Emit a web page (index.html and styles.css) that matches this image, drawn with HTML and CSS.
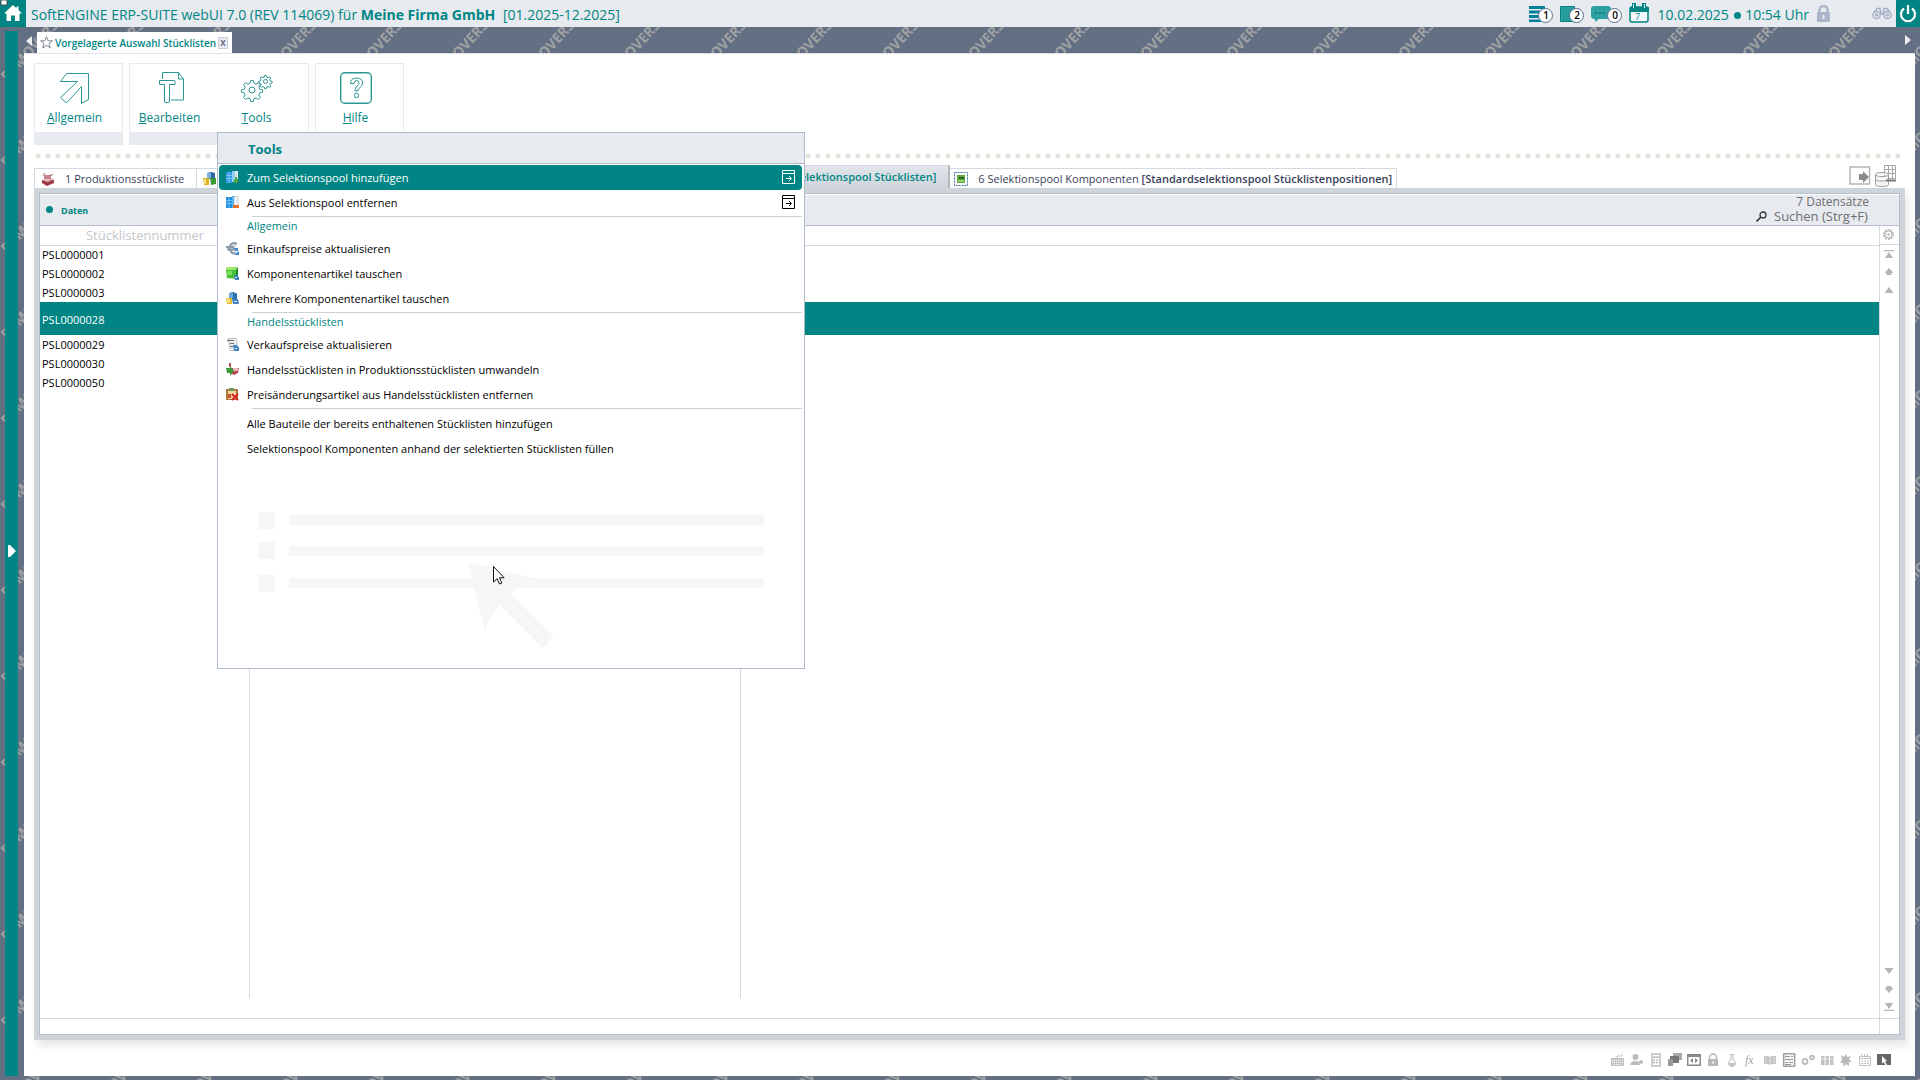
FILE: index.html
```html
<!DOCTYPE html>
<html lang="de">
<head>
<meta charset="utf-8">
<title>SoftENGINE ERP-SUITE webUI 7.0</title>
<link rel="stylesheet" href="styles.css">
</head>
<body>
<svg class="watermark" aria-hidden="true">
  <defs>
    <pattern id="demo" width="86" height="86" patternUnits="userSpaceOnUse">
      <g class="watermark-text">
        <text transform="translate(7 82) rotate(-47)">DEMOVERSION</text>
        <text transform="translate(93 82) rotate(-47)">DEMOVERSION</text>
        <text transform="translate(7 168) rotate(-47)">DEMOVERSION</text>
      </g>
    </pattern>
  </defs>
  <rect width="100%" height="100%" fill="url(#demo)"/>
</svg>

<header class="topbar">
  <button class="home" type="button" aria-label="Startseite">
    <svg width="26" height="27" viewBox="0 0 26 27"><path fill="#fff" d="M13 5 4 13.500H6.500V21H11V15.500H15V21H19.500V13.500H22L18.500 10V6.500H16.500V8.200Z"/><rect x="1" y="0" width="6" height="5" fill="#fff" stroke="#555"/></svg>
  </button>
  <h1 class="app-title">SoftENGINE ERP-SUITE webUI 7.0 (REV 114069) für <strong>Meine Firma GmbH</strong> <span>[01.2025-12.2025]</span></h1>
  <div class="topbar-tools">
    <button class="counter" type="button" aria-label="Aufgaben">
      <svg width="17" height="17" viewBox="0 0 17 17" fill="#00809b"><path d="M0 0h16v3H0zM0 4.500h12v3H0zM0 9h10v3H0zM0 13.500h12v2.500H0z"/></svg><span class="badge">1</span>
    </button>
    <button class="counter" type="button" aria-label="Belege">
      <svg width="17" height="17" viewBox="0 0 17 17"><path fill="#2fa0a2" stroke="#008584" d="M.5.5h14v15H.5z"/><path stroke="#008584" stroke-dasharray="1 1" d="M3 4h2M6 4h7M3 7h2M6 7h7M3 10h2M6 10h7M3 13h2M6 13h5"/></svg><span class="badge">2</span>
    </button>
    <button class="counter counter-wide" type="button" aria-label="Nachrichten">
      <svg width="21" height="17" viewBox="0 0 21 17"><path fill="#2fa0a2" d="M3 0h14q3 0 3 3v7q0 3-3 3H8l-4 3v-3H3q-3 0-3-3V3q0-3 3-3z"/><path fill="#008584" d="M4 6h2v2H4zM8 6h2v2H8zM12 6h2v2h-2z"/></svg><span class="badge">0</span>
    </button>
    <svg width="21" height="21" viewBox="0 0 21 21"><rect x="1" y="4" width="18" height="15" rx="2" fill="#f4f8f9" stroke="#008584" stroke-width="1.500"/><path fill="#008584" d="M1 4h19v5H1zM3 0h4v5H3zM13 0h4v5h-4z"/><path stroke="#e7eaef" d="M4.500 1v4M15.500 1v4"/><text x="6" y="17" class="cal-day">7</text></svg>
    <time class="clock">10.02.2025 <i></i> 10:54 Uhr</time>
    <svg class="lock" width="15" height="18" viewBox="0 0 15 18"><path fill="none" stroke="#aab6c8" stroke-width="2.500" d="M3.500 8V5a4 4 0 0 1 8 0v3"/><rect x="1" y="7" width="13" height="10" rx="1" fill="#aab6c8"/><path fill="#e7eaef" d="M6.500 10h2v4h-2z"/></svg>
    <svg width="20" height="13" viewBox="0 0 20 13"><g fill="none" stroke="#a5b2c6" stroke-width="1.500"><circle cx="4.500" cy="8" r="3.600"/><circle cx="15.500" cy="8" r="3.600"/><circle cx="4.500" cy="8" r="1"/><circle cx="15.500" cy="8" r="1"/><path d="M2 5 5 1.500h3L9 7h2l1-5.500h3L18 5"/></g></svg>
  </div>
  <button class="power" type="button" aria-label="Abmelden">
    <svg width="18" height="18" viewBox="0 0 18 18"><path fill="none" stroke="#fff" stroke-width="2.200" d="M5 3.500a7 7 0 1 0 8 0M9 0v9"/></svg>
  </button>
</header>

<div class="workspace">
  <aside class="rail"><svg width="8" height="12" viewBox="0 0 8 12"><path fill="#fff" d="M0 0h2l6 6-6 6H0z"/></svg></aside>
  <div class="content">
    <nav class="tabstrip">
      <svg class="scroll-left" width="6" height="10" viewBox="0 0 6 10"><path fill="#eee" d="M6 0 0 5l6 5z"/></svg>
      <div class="doc-tab">
        <svg width="13" height="13" viewBox="0 0 13 13"><path fill="none" stroke="#7d828c" d="m6.500.8 1.700 4h4.200L9 7.600l1.300 4.300-3.800-2.600-3.800 2.600L4 7.600.6 4.800h4.200z"/></svg>
        <a href="#daten">Vorgelagerte Auswahl Stücklisten</a>
        <button type="button" aria-label="Schließen">x</button>
      </div>
      <svg class="scroll-right" width="6" height="10" viewBox="0 0 6 10"><path fill="#eee" d="M0 0l6 5-6 5z"/></svg>
    </nav>

    <main class="page">
      <div class="ribbon">
        <div class="ribbon-group">
          <button type="button"><svg width="32" height="32" viewBox="0 0 32 32"><path d="M7.500 1.500h22v26l-7 4v-17L7.500 31l-6-5.500 17-16H1.500z"/></svg><span><u>A</u>llgemein</span></button>
        </div>
        <div class="ribbon-group">
          <button type="button"><svg width="32" height="32" viewBox="0 0 32 32"><path d="M8.500 7V.5h16l5 6.500v21H17M24.500.5V7h5M5.500 8.500H20q1 0 1 1v3h-5.500V30q-2.500 1.500-5 0V12.500H5.500z"/></svg><span><u>B</u>earbeiten</span></button>
          <div class="ribbon-menu">
            <button type="button" aria-expanded="true"><svg width="32" height="32" viewBox="0 0 32 32"><circle cx="11" cy="18" r="3"/><path d="m9.700 8.500 2.600 0 .6 2.800 2 .9 2.500-1.500 1.900 1.900-1.500 2.500.8 2 2.900.7v2.500l-2.900.7-.8 2 1.500 2.500-1.900 1.900-2.500-1.500-2 .8-.6 2.800H9.700l-.7-2.800-2-.8-2.500 1.500-1.900-1.900 1.500-2.500-.8-2-2.800-.7v-2.500l2.800-.7.8-2-1.500-2.500 1.900-1.900L7 12.200l2-.9z"/><circle cx="24.500" cy="9.500" r="2"/><path d="m23.700 3.500 1.600 0 .5 1.700 1.200.5 1.600-.9 1.200 1.200-.9 1.600.5 1.200 1.700.5v1.600l-1.700.5-.5 1.200.9 1.600-1.200 1.200-1.600-.9-1.200.5-.5 1.700h-1.600l-.5-1.700-1.200-.5-1.600.9-1.200-1.200.9-1.600-.5-1.200-1.700-.5V9.300l1.700-.5.5-1.200-.9-1.600 1.200-1.200 1.600.9 1.200-.5z"/></svg><span><u>T</u>ools</span></button>
            <div class="menu" role="menu">
              <h2>Tools</h2>
              <div class="menu-body">
                <button type="button" role="menuitem" class="active"><svg class="ico" viewBox="0 0 13 13"><path fill="#2e9be8" d="M0 1h6v11H0z"/><path fill="#8fd0f8" d="M6 0h3v11H6z"/><path stroke="#7cc4f3" d="M0 4.500h6M0 7.500h6M3 1v11"/><path fill="#dfe6ea" d="M9 0h3v8H9z"/><path fill="#4aa53c" d="M9 6h2v3h2l-3 4-3-4h2z"/></svg><span>Zum Selektionspool hinzufügen</span><svg class="win" viewBox="0 0 14 15"><path d="M.5.5h12v13H.5zM.5 3.500h12M4 8.500h5M7 6l2.500 2.500L7 11"/></svg></button>
                <button type="button" role="menuitem"><svg class="ico" viewBox="0 0 13 13"><path fill="#1e8fe0" d="M0 1h6v11H0z"/><path fill="#55b4f4" d="M6 0h2v12H6z"/><path stroke="#6fc0f5" d="M0 4.500h6M0 7.500h6M3 1v11"/><path fill="#f2f4f6" stroke="#a9b4bd" stroke-width=".6" d="M8 .5h4v9H8z"/><path fill="#e8722a" d="M7 9h6v3H7z"/></svg><span>Aus Selektionspool entfernen</span><svg class="win" viewBox="0 0 14 15"><path d="M.5.5h12v13H.5zM.5 3.500h12M4 8.500h5M7 6l2.500 2.500L7 11"/></svg></button>
                <h3>Allgemein</h3>
                <button type="button" role="menuitem"><svg class="ico" viewBox="0 0 13 13"><path fill="#dfe3e7" d="M4 1h6v10H5L3 8V3z"/><path fill="none" stroke="#8c97a3" stroke-width="1.800" d="M11 2Q7-.5 4.500 3T5 10q2 2 4 1M0 5h8M1 7.500h7"/><path fill="#4b8bcc" d="M7 6h5v3H9zM13 9v4H8l2-2z"/></svg><span>Einkaufspreise aktualisieren</span></button>
                <button type="button" role="menuitem"><svg class="ico" viewBox="0 0 13 13"><path fill="#9be86c" d="M0 1 2 0h10l-2 3H0z"/><path fill="#45c23a" d="M0 3h10v9L1 11z"/><path fill="#7fdc5c" d="M1 4h5v4H1z"/><path fill="#1d8a2a" d="m10 3 2-3v9l-2 3z"/><path fill="#3f80c8" d="M8 8h4v2h1v3H9z"/><path fill="#cfe3f7" d="M9 10h2v1H9z"/></svg><span>Komponentenartikel tauschen</span></button>
                <button type="button" role="menuitem"><svg class="ico" viewBox="0 0 13 13"><path fill="#2d6fae" d="M3 1 7 0l4 1.500V7H3z"/><path fill="#6aa8dc" d="M3 1h4v5H3z"/><path fill="#e2b82c" d="M0 6h6v6H1z"/><path fill="#f6e07a" d="M1 7h3v4H1z"/><path fill="#4684c8" d="M6 7h6l1 5H7z"/><path fill="#cde2f6" d="M8 9h3v1H8z"/></svg><span>Mehrere Komponentenartikel tauschen</span></button>
                <h3>Handelsstücklisten</h3>
                <button type="button" role="menuitem"><svg class="ico" viewBox="0 0 13 13"><path fill="#e8eaec" stroke="#9aa1a8" stroke-width=".6" d="M2 .5h8l1 3v9H4z"/><path stroke="#6a7076" d="M1 2.500h7M4 5.500h4M4 8.500h3"/><path fill="#4583c7" d="M7 7h4l2 3v3H8z"/><path fill="#d6e6f7" d="M9 10h2v1H9z"/></svg><span>Verkaufspreise aktualisieren</span></button>
                <button type="button" role="menuitem"><svg class="ico" viewBox="0 0 13 13"><path fill="#b6474f" d="M4 5h9l-1 5-4 2-4-2z"/><path fill="#e6b6b9" d="M7 5h5v3H7z"/><path fill="#3d9a3a" d="M0 5h4V3l4 5-4 5v-3H1z"/><path fill="#c05058" d="M3 0h2v4H3z"/></svg><span>Handelsstücklisten in Produktionsstücklisten umwandeln</span></button>
                <button type="button" role="menuitem"><svg class="ico" viewBox="0 0 13 13"><path fill="#b07a3c" d="M0 1h12v11H0z"/><path fill="#f0d4a4" d="M2 3h8v8H2z"/><path fill="#6e9f50" d="M3 0h5v3H3z"/><path fill="#c9562c" d="M2 6h3v4H2z"/><path stroke="#d8201c" stroke-width="1.800" d="m6 6 6 6m0-6-6 6"/></svg><span>Preisänderungsartikel aus Handelsstücklisten entfernen</span></button>
                <hr>
                <button type="button" role="menuitem"><span>Alle Bauteile der bereits enthaltenen Stücklisten hinzufügen</span></button>
                <button type="button" role="menuitem"><span>Selektionspool Komponenten anhand der selektierten Stücklisten füllen</span></button>
              </div>
              <svg class="menu-art" width="508" height="137" viewBox="0 0 508 137" fill="#f4f6f8"><path d="M1 0h17v17H1zM1 30h17v17H1zM1 63h17v17H1zM32 3h475v10H32zM32 34h475v10H32zM32 66h475v10H32z"/><path d="m211 50 64 16-22 15 44 44-11 11-43-43q-12 12-15 27z"/></svg>
            </div>
          </div>
        </div>
        <div class="ribbon-group">
          <button type="button"><svg width="32" height="32" viewBox="0 0 32 32"><rect x=".7" y=".7" width="30.600" height="30.600" rx="4" stroke-width="1.400"/><path d="M10.500 11.500q0-5.500 6-5.500t6 5q0 3-3 5-1.500 1-1.500 3h-3q0-3.500 2-5 2-1.500 2-3 0-2.500-2.500-2.500T14 11.500z"/><circle cx="16.500" cy="23.500" r="2.200"/></svg><span><u>H</u>ilfe</span></button>
        </div>
      </div>
      <div class="dots"></div>

      <nav class="view-tabs">
        <a href="#t1" class="view-tab"><svg width="14" height="14" viewBox="0 0 14 14"><path fill="#a03a42" d="M1 8h12v3l-7 3-5-3z"/><path fill="#e3b5b9" d="m1 8 6 2 6-3-3-1z"/><path fill="#c9848a" d="M3 3h7v4H3z"/><path stroke="#8b5a5f" d="M2 3.500 4 1M8 4l4-1.500"/></svg><span>1 Produktionsstückliste</span></a>
        <a href="#t2" class="view-tab view-tab-wide" aria-label="Tab 2"><svg width="14" height="14" viewBox="0 0 14 14"><path fill="#2c66a8" d="M4 1 8 0l4 1v6H4z"/><path fill="#7fb2e2" d="M4 1h4v5H4z"/><path fill="#d9b125" d="M0 6h6v7H1z"/><path fill="#f5e58c" d="M1 7h2v5H1z"/><path fill="#3c9a35" d="M7 6h6v6l-5 1z"/></svg></a>
        <a href="#t5" class="view-tab current"><b>[Standardselektionspool Stücklisten]</b></a>
        <a href="#t6" class="view-tab view-tab-last"><svg width="14" height="14" viewBox="0 0 14 14"><path fill="#fff" stroke="#41719c" stroke-dasharray="2 1" d="M.5.500h13v13H.5z"/><path fill="#5da83c" d="M3 3h8v8H3z"/><path fill="#2f5f22" d="M5 5h5v2H5z"/><path fill="#8fd46a" d="M4 8h6v2H4z"/></svg><span>6 Selektionspool Komponenten <b>[Standardselektionspool Stücklistenpositionen]</b></span></a>
        <div class="view-tools">
          <svg width="22" height="20" viewBox="0 0 22 20"><path fill="#fff" stroke="#b5b5b5" stroke-width="1.500" d="M1 1h19.500v17H1z"/><path fill="#8a8a8a" d="M10 8h4V5l6 6-6 6v-3h-4z"/></svg>
          <svg width="22" height="22" viewBox="0 0 22 22"><path fill="#fff" stroke="#a6a6a6" d="M9.500.5h11v13h-11zM9.500 4.500h11M9.500 8.500h11M13.500.5v13M17.500.5v13"/><path fill="#f4f4f4" stroke="#a0a0a0" d="M.5 9.500q0-2 6.500-2t6.500 2v10q0 2-6.500 2t-6.500-2zM.5 9.500q0 2 6.500 2t6.500-2M.5 14q0 2 6.500 2t6.500-2"/><path stroke="#777" stroke-width="2" d="M11 15.500h10"/></svg>
        </div>
      </nav>

      <section class="panel" id="daten">
        <header class="panel-head">
          <h2><i></i>Daten</h2>
          <div class="panel-search">
            <output>7 Datensätze</output>
            <label><svg width="11" height="11" viewBox="0 0 11 11"><circle cx="7" cy="4" r="3" fill="none" stroke="#333" stroke-width="1.300"/><path stroke="#333" stroke-width="1.600" d="M5 6 .5 10.500"/></svg><input type="text" placeholder="Suchen (Strg+F)" aria-label="Suchen"></label>
          </div>
        </header>
        <div class="panel-body">
          <div class="grid">
            <table>
              <colgroup><col class="c1"><col class="c2"><col></colgroup>
              <thead><tr><th scope="col">Stücklistennummer</th><th></th><th></th></tr></thead>
              <tbody>
                <tr><td>PSL0000001</td><td></td><td></td></tr>
                <tr><td>PSL0000002</td><td></td><td></td></tr>
                <tr><td>PSL0000003</td><td></td><td></td></tr>
                <tr class="selected"><td>PSL0000028</td><td></td><td></td></tr>
                <tr><td>PSL0000029</td><td></td><td></td></tr>
                <tr><td>PSL0000030</td><td></td><td></td></tr>
                <tr><td>PSL0000050</td><td></td><td></td></tr>
              </tbody>
            </table>
            <div class="grid-fill"><div></div><div></div></div>
            <div class="grid-foot"></div>
          </div>
          <div class="grid-rail">
            <div class="rail-cfg"><svg width="11" height="11" viewBox="0 0 11 11"><circle cx="5.500" cy="5.500" r="4.500" fill="none" stroke="#b4b4b4" stroke-width="2" stroke-dasharray="1.800 1"/><circle cx="5.500" cy="5.500" r="3.500" fill="none" stroke="#b4b4b4"/><circle cx="5.500" cy="5.500" r="1.300" fill="#b4b4b4"/></svg></div>
            <div class="rail-arrows">
              <svg viewBox="0 0 10 8"><path d="M0 0h10v1.200H0zM5 2l4 6H1z"/></svg>
              <svg viewBox="0 0 10 8"><path d="m5 0 4.500 5H7l1 2H2l1-2H.5z"/></svg>
              <svg viewBox="0 0 10 8"><path d="m5 1 4.500 6h-9z"/></svg>
              <svg class="push" viewBox="0 0 10 8"><path d="m5 7 4.500-6h-9z"/></svg>
              <svg viewBox="0 0 10 8"><path d="m5 8 4.500-5H7L8 1H2l1 2H.5z"/></svg>
              <svg viewBox="0 0 10 8"><path d="M0 6.800h10V8H0zM5 6l4-6H1z"/></svg>
            </div>
            <div class="grid-foot"></div>
          </div>
        </div>
      </section>

      <footer class="status">
        <svg viewBox="0 0 14 14"><path d="M0 5h13v8H0z" fill="#c4c4c4"/><path stroke="#fff" stroke-dasharray="1 1" d="M1 7.500h11M1 9.500h11M3 11.500h7"/><path fill="none" stroke="#c4c4c4" d="M6 5V3h5V1"/></svg>
        <svg viewBox="0 0 14 14" fill="#bdbdbd"><circle cx="5.500" cy="4" r="3"/><path d="M0 12q1-4 5.500-4T10 12z"/><circle cx="11" cy="9" r="2"/></svg>
        <svg viewBox="0 0 14 14"><rect x="3" y="1" width="8" height="12" fill="none" stroke="#bdbdbd" stroke-width="1.500"/><path stroke="#bdbdbd" stroke-width="1.500" d="M4 4h6"/><path stroke="#bdbdbd" stroke-width="1.500" stroke-dasharray="2 1" d="M4 7h7M4 9.500h7"/></svg>
        <svg viewBox="0 0 14 14"><path fill="#aaa" d="M5 0h9v7H5z"/><path fill="#777" d="M2 3h9v7H2z"/><path fill="#999" d="M0 6h5v7H0z"/></svg>
        <svg viewBox="0 0 14 14"><path fill="#fff" stroke="#888" stroke-width="1.500" d="M.7 2.700h12.600v9.600H.7z"/><path fill="#888" d="M0 1h14v3H0zM6 5v5L3 7.500zM8 5v5l3-2.500z"/></svg>
        <svg viewBox="0 0 14 14"><path fill="none" stroke="#b8b8b8" stroke-width="1.500" d="M3.500 6V4.500a3.500 3.500 0 0 1 7 0V6"/><path fill="#b8b8b8" d="M2 6h10v7H2z"/><path fill="#fff" d="M6.500 8h1v3h-1z"/></svg>
        <svg viewBox="0 0 14 14"><path fill="none" stroke="#bdbdbd" d="M5 1.500h4M6 2v5a3.500 3.500 0 1 0 2 0V2"/><path fill="#bdbdbd" d="M4 10h6q-.5 3-3 3t-3-3z"/></svg>
        <svg viewBox="0 0 14 14"><text x="1" y="11" class="fx">fx</text></svg>
        <svg viewBox="0 0 14 14"><path fill="#c2c2c2" d="M1 3q3-1 6 1 3-2 6-1v8q-3-1-6 1-3-2-6-1z"/><path stroke="#fff" stroke-width=".6" d="M7 4v8M3 4v6M11 4v6"/></svg>
        <svg viewBox="0 0 14 14"><path fill="#f4f4f4" stroke="#a0a0a0" stroke-width="1.500" d="M1.700.7h11v12.600h-11z"/><path stroke="#999" d="M3 3.500h5M3 6.500h8M3 9.500h3M7 9.500h4M9 3.500h2M3 11.500h6"/></svg>
        <svg viewBox="0 0 14 14"><g fill="none" stroke="#b8b8b8" stroke-width="1.600"><circle cx="4" cy="8.500" r="2.600"/><circle cx="11" cy="4.500" r="1.900"/></g></svg>
        <svg viewBox="0 0 14 14"><path fill="#c2c2c2" d="M1 3h3.500v9H1zM5.500 3H9v9H5.500zM10 3h3.500v9H10z"/><path stroke="#fff" stroke-width=".6" d="M1 6h13"/></svg>
        <svg viewBox="0 0 14 14"><path fill="#bababa" d="m2 2 3 2 2-3 1 3 4-1-2 3 3 3-3 0 0 4-3-2-2 3-1-4-3 0 2-3z"/></svg>
        <svg viewBox="0 0 14 14"><path fill="none" stroke="#c2c2c2" d="M1.500 3.500h11v9h-11zM1 5.500h12M3.500 1v2M6.500 1v2M9.500 1v2"/><path stroke="#c2c2c2" stroke-dasharray="2 1" d="M3 8h8M3 10.500h8"/></svg>
        <svg viewBox="0 0 14 14"><path fill="#666" d="M0 1h14v11H0z"/><path fill="#fff" d="m5 3 5 5H8l2 4-1.500 1-1.500-4-2 1.500z"/></svg>
      </footer>
    </main>
  </div>
</div>
<svg class="pointer" width="12" height="19" viewBox="0 0 12 19"><path fill="#fff" stroke="#111" d="M.5.500v15.500l3.600-3.300 2.400 5.300 2.300-1-2.300-5.200h4.600z"/></svg>
</body>
</html>
```
FILE: styles.css
```css
:root {
  --teal: #008584;
  --bar: #e7eaef;
  --slate: #637083;
  --line: #d3dae2;
}
* { box-sizing: border-box; }
body {
  margin: 0;
  height: 100vh;
  display: flex;
  flex-direction: column;
  background: var(--slate);
  font: 11px/16px "Open Sans", sans-serif;
  color: #000;
  overflow: hidden;
}
button {
  font: inherit;
  color: inherit;
  background: none;
  border: 0;
  padding: 0;
}
h1, h2, h3 { margin: 0; font-size: inherit; font-weight: 400; }
svg { display: block; flex: none; }
a { color: inherit; text-decoration: none; }

.watermark { position: absolute; inset: 0; width: 100%; height: 100%; z-index: -1; }
.watermark-text { font: 700 14px "Open Sans", sans-serif; fill: #a0a1a3; }

/* top bar */
.topbar {
  display: flex;
  align-items: center;
  height: 27px;
  background: var(--bar);
  color: var(--teal);
}
.home { width: 26px; background: var(--teal); align-self: stretch; }
.app-title { flex: 1; padding-left: 5px; font-size: 14px; line-height: 27px; padding-top: 1px; white-space: nowrap; }
.app-title span { padding-left: 4px; }
.topbar-tools { display: flex; align-items: center; gap: 7px; padding-right: 4px; }
.counter { position: relative; width: 24px; height: 19px; padding-top: 1px; }
.counter-wide { width: 31px; }
.badge {
  position: absolute;
  right: 0;
  bottom: 0;
  width: 15px;
  height: 15px;
  border: 1px solid #5b6f8c;
  border-radius: 50%;
  background: #fff;
  color: #000;
  font-weight: 600;
  font-size: 10px;
  line-height: 13px;
  text-align: center;
}
.cal-day { font: 9px "Open Sans", sans-serif; fill: var(--teal); }
.clock { font-size: 14px; line-height: 27px; padding-top: 1px; white-space: nowrap; }
.clock i { display: inline-block; width: 7px; height: 7px; margin: 0 1px 1px; border-radius: 50%; background: var(--teal); }
.lock { margin-right: 34px; }
.power {
  width: 24px;
  align-self: stretch;
  display: flex;
  align-items: center;
  justify-content: center;
  background: var(--teal);
}

/* frame */
.workspace { flex: 1; display: flex; min-height: 0; padding: 0 5px 4px; }
.rail {
  width: 13px;
  margin: 4px 6px 0 0;
  padding: 0 0 6px 3px;
  display: flex;
  align-items: center;
  background: var(--teal);
}
.content { flex: 1; min-width: 0; display: flex; flex-direction: column; }
.tabstrip { height: 26px; display: flex; align-items: flex-end; }
.scroll-left { margin: 0 5px 7px 2px; }
.scroll-right { margin: 0 4px 8px auto; }
.doc-tab {
  display: flex;
  align-items: center;
  gap: 2px;
  height: 21px;
  width: 195px;
  padding: 0 4px 0 3px;
  background: #fff;
  color: var(--teal);
  font-weight: 600;
  font-size: 10px;
  white-space: nowrap;
}
.doc-tab a { flex: 1; }
.doc-tab button {
  width: 12px;
  height: 12px;
  border: 1px solid #c6cdd8;
  background: var(--bar);
  color: #5b6780;
  line-height: 9px;
}
.page {
  flex: 1;
  min-height: 0;
  display: flex;
  flex-direction: column;
  padding: 9px 10px 0;
  border-top: 1px solid #dfe2e7;
  background: #fff;
}

/* ribbon */
.ribbon { display: flex; gap: 6px; color: var(--teal); font-size: 12px; }
.ribbon-group {
  display: flex;
  align-items: flex-start;
  height: 82px;
  border: 1px solid var(--bar);
  border-bottom: 13px solid var(--bar);
}
.ribbon-group > button, .ribbon-menu > button {
  width: 87px;
  padding: 8px 8px 0 0;
  text-align: center;
}
.ribbon-group > button svg, .ribbon-menu > button svg {
  margin: 0 auto 6px;
  fill: none;
  stroke: #2c9795;
}
.ribbon-menu { position: relative; }
.ribbon-menu > button { width: 91px; padding-right: 12px; }

.menu {
  position: absolute;
  left: 0;
  top: 68px;
  z-index: 2;
  width: 588px;
  height: 537px;
  border: 1px solid #aebbcb;
  background: #fff;
  color: #000;
  font-size: 11px;
}
.menu h2 {
  height: 31px;
  padding-left: 30px;
  border-bottom: 1px solid #aebbcb;
  background: var(--bar);
  color: var(--teal);
  font-weight: 700;
  font-size: 13px;
  line-height: 32px;
}
.menu-body { padding: 1px 2px 0 1px; }
.menu-body button {
  display: grid;
  grid-template-columns: 13px 1fr 14px;
  column-gap: 8px;
  align-items: center;
  width: 100%;
  height: 25px;
  padding: 0 6px 0 7px;
  border-radius: 4px;
  text-align: left;
}
.menu-body span { grid-column: 2; }
.menu-body .active { background: var(--teal); color: #fff; }
.menu-body h3 {
  padding: 1px 0 2px 28px;
  color: var(--teal);
}
.menu-body h3::before, .menu-body hr {
  content: "";
  display: block;
  height: 1px;
  margin: 0 0 1px 5px;
  background: #cfd1d4;
}
.menu-body hr { margin: 1px 0 2px 33px; border: 0; }
.ico { width: 13px; height: 13px; }
.win { width: 14px; height: 15px; fill: none; stroke: currentColor; }
.menu-art { margin: 51px auto 0; }

.dots {
  height: 23px;
  margin-right: 5px;
  background: radial-gradient(circle, #e4e2da 2px, transparent 3px) -1px 6px / 10px 10px repeat-x;
}

/* view tabs */
.view-tabs { display: flex; align-items: flex-end; height: 20px; color: #39415a; white-space: nowrap; }
.view-tab {
  display: flex;
  align-items: center;
  gap: 10px;
  height: 20px;
  padding: 1px 12px 0 6px;
  border: 1px solid var(--line);
  border-bottom: 0;
  background: #fff;
}
.view-tab b { font-weight: 600; }
.view-tab-wide { width: 440px; border-left: 0; }
.current {
  width: 313px;
  height: 23px;
  padding-bottom: 2px;
  justify-content: flex-end;
  background: linear-gradient(#e2e6ec, #cfd4da);
  color: var(--teal);
  border-right: 2px solid #b4b9bd;
}
.view-tab-last { border-left: 0; padding: 1px 4px 0; }
.view-tools { display: flex; align-items: center; gap: 4px; margin-left: auto; padding: 0 8px 1px 0; }

/* panel */
.panel {
  flex: 1;
  min-height: 0;
  display: flex;
  flex-direction: column;
  border: 5px solid #cfd4da;
  border-top-width: 6px;
  outline: 1px solid #b4bfca;
  outline-offset: -6px;
  padding: 1px;
  box-shadow: 3px 6px 8px #00000018;
}
.panel-head {
  display: flex;
  justify-content: space-between;
  align-items: center;
  height: 31px;
  border-bottom: 1px solid #b4bfca;
  background: var(--bar);
}
.panel-head h2 { display: flex; gap: 8px; padding: 2px 0 0 6px; color: var(--teal); font-size: 9px; font-weight: 700; line-height: 16px; }
.panel-head i { width: 7px; height: 7px; margin-top: 3px; border-radius: 50%; background: var(--teal); }
.panel-search { padding: 0 28px 2px 0; color: #6f6f6f; font-size: 12px; text-align: right; }
.panel-search output { display: block; line-height: 15px; padding-right: 2px; }
.panel-search label { display: flex; align-items: center; justify-content: flex-end; gap: 7px; }
.panel-search input {
  width: 97px;
  height: 15px;
  padding: 0;
  border: 0;
  background: none;
  font: 13px/15px "Open Sans", sans-serif;
}
.panel-search input::placeholder { color: #6f6f6f; opacity: 1; }
.panel-body { flex: 1; min-height: 0; display: flex; }
.grid { flex: 1; display: flex; flex-direction: column; }
table { width: 100%; table-layout: fixed; border-collapse: collapse; }
.c1 { width: 210px; }
.c2 { width: 491px; }
th { height: 19px; padding: 0; border-bottom: 1px solid var(--line); color: #c3c5c8; font-size: 13px; font-weight: 400; line-height: 16px; }
td { height: 19px; padding: 1px 2px 0; line-height: 16px; }
.selected td { height: 33px; padding-top: 2px; background: var(--teal); color: #fff; }
.grid-fill { flex: 1; display: flex; margin-bottom: 20px; }
.grid-fill div { width: 210px; border-right: 1px solid var(--line); }
.grid-fill div + div { width: 491px; }
.grid-foot { height: 16px; border-top: 1px solid var(--line); }
.grid-rail { width: 20px; border-left: 1px solid var(--line); display: flex; flex-direction: column; }
.rail-cfg { height: 19px; padding: 3px 3px; border-bottom: 1px solid var(--line); }
.rail-arrows { flex: 1; display: flex; flex-direction: column; gap: 10px; padding: 5px 4px 7px; fill: #b2b4b6; }
.rail-arrows svg { width: 10px; height: 8px; }
.push { margin-top: auto; }

.status { display: flex; justify-content: flex-end; gap: 5px; height: 36px; padding: 13px 14px 0 0; }
.status svg { width: 14px; height: 14px; }
.fx { font: italic 12px "Liberation Serif", serif; fill: #a8a8a8; }
.pointer { position: absolute; left: 493px; top: 566px; z-index: 3; }
```
